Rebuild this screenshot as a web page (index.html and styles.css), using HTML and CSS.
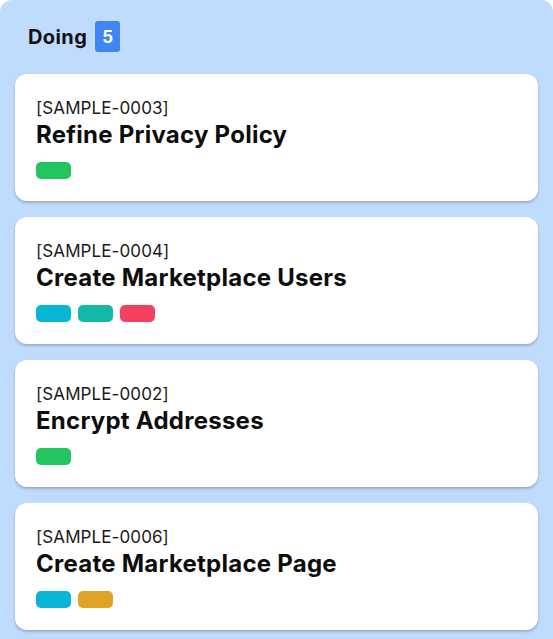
FILE: index.html
```html
<!DOCTYPE html>
<html>
<head>
<meta charset="utf-8">
<link rel="stylesheet" href="styles.css">
</head>
<body>
<section class="column">
  <header class="column-header">
    <span class="column-title">Doing</span>
    <span class="count">5</span>
  </header>
  <div class="cards">
    <article class="card">
      <div class="card-id">[SAMPLE-0003]</div>
      <div class="card-title">Refine Privacy Policy</div>
      <div class="tags"><span class="tag green"></span></div>
    </article>
    <article class="card">
      <div class="card-id">[SAMPLE-0004]</div>
      <div class="card-title">Create Marketplace Users</div>
      <div class="tags"><span class="tag cyan"></span><span class="tag teal"></span><span class="tag rose"></span></div>
    </article>
    <article class="card">
      <div class="card-id">[SAMPLE-0002]</div>
      <div class="card-title">Encrypt Addresses</div>
      <div class="tags"><span class="tag green"></span></div>
    </article>
    <article class="card">
      <div class="card-id">[SAMPLE-0006]</div>
      <div class="card-title">Create Marketplace Page</div>
      <div class="tags"><span class="tag cyan"></span><span class="tag amber"></span></div>
    </article>
  </div>
</section>
</body>
</html>
```

FILE: styles.css
```css
html, body {
  margin: 0;
  padding: 0;
  background: #ffffff;
}
body {
  font-family: Inter, "Noto Sans", sans-serif;
  color: #111111;
}
.column {
  background: #bfdbfe;
  border-radius: 12px 12px 0 0;
  min-height: 639px;
  padding: 21px 15px 20px;
  box-sizing: border-box;
}
.column-header {
  display: flex;
  align-items: center;
  gap: 8px;
  height: 31px;
  padding-left: 13px;
  margin-bottom: 22px;
}
.column-title {
  font-size: 20px;
  letter-spacing: 0.4px;
  font-weight: 700;
  color: #111111;
}
.count {
  display: flex;
  align-items: center;
  justify-content: center;
  width: 25px;
  height: 31px;
  background: #3f86f2;
  color: #ffffff;
  font-weight: 700;
  font-size: 17px;
  border-radius: 3px;
}
.cards {
  display: flex;
  flex-direction: column;
  gap: 16px;
}
.card {
  background: #ffffff;
  border-radius: 12px;
  padding: 23px 21px 22px;
  box-shadow: 0 2px 3px rgba(0, 0, 0, 0.18), 0 1px 2px rgba(0, 0, 0, 0.06);
}
.card-id {
  font-size: 17px;
  line-height: 22px;
  letter-spacing: 0.1px;
  color: #1a1a1a;
}
.card-title {
  font-size: 24px;
  line-height: 32px;
  letter-spacing: 0.25px;
  font-weight: 700;
  color: #0d0d0d;
}
.tags {
  display: flex;
  gap: 7px;
  margin-top: 11px;
}
.tag {
  width: 35px;
  height: 17px;
  border-radius: 5px;
}
.green { background: #22c55e; }
.cyan { background: #06b6d4; }
.teal { background: #14b8a6; }
.rose { background: #f43f5e; }
.amber { background: #dfa325; }
```
